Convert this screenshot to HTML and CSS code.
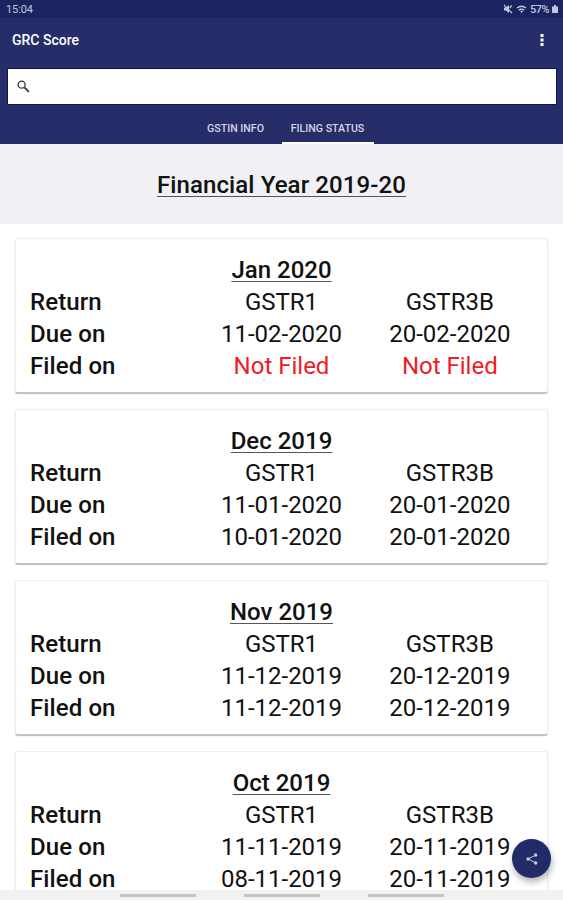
FILE: index.html
```html
<!DOCTYPE html>
<html lang="en">
  <head>
    <meta charset="UTF-8" />
    <meta name="viewport" content="width=device-width, initial-scale=1.0" />
    <title>GRC Score</title>
    <link rel="stylesheet" href="styles.css">
  </head>
  <body>
    <div class="screen">
      <div class="status-bar">
        <span class="clock">15:04</span>
        <div class="status-icons">
          <svg class="mute-icon" viewBox="0 0 10 10">
            <path d="M1 3.5h2L6 1v8L3 6.5H1z" fill="currentColor" />
            <path d="M1 1l8 8M6.5 4L9 1.5" stroke="currentColor" stroke-width="1.2" />
          </svg>
          <svg class="wifi-icon" viewBox="0 0 12 10">
            <path d="M1 3.4Q6-.6 11 3.4M3 5.8q3-2.2 6 0" fill="none" stroke="currentColor" stroke-width="1.5" />
            <path d="M4.5 7Q6 6 7.5 7L6 9z" fill="currentColor" />
          </svg>
          <span class="battery">57%</span>
          <svg class="battery-icon" viewBox="0 0 6 8">
            <path d="M2 0h2v1.5h2V8H0V1.5h2z" fill="currentColor" />
          </svg>
        </div>
      </div>

      <header class="header">
        <div class="toolbar">
          <h1 class="title">GRC Score</h1>
          <svg class="menu-icon" viewBox="0 0 4 14">
            <path d="M.5 1h3v3h-3zM.5 5.5h3v3h-3zM.5 10h3v3h-3z" fill="currentColor" />
          </svg>
        </div>
        <div class="search-box">
          <svg class="search-icon" viewBox="0 0 14 14">
            <circle cx="5" cy="5" r="3.8" fill="none" stroke="currentColor" stroke-width="1.4" />
            <path d="M8 8l4.7 4.7" stroke="currentColor" stroke-width="1.9" />
          </svg>
        </div>
        <nav class="tabs">
          <a class="tab">GSTIN INFO</a>
          <a class="tab active">FILING STATUS</a>
        </nav>
      </header>

      <div class="year-banner">
        <h2 class="year">Financial Year 2019-20</h2>
      </div>

      <main class="card-list">
        <section class="card">
          <h3 class="month">Jan 2020</h3>
          <div class="row"><b>Return</b><span>GSTR1</span><span>GSTR3B</span></div>
          <div class="row"><b>Due on</b><span>11-02-2020</span><span>20-02-2020</span></div>
          <div class="row not-filed"><b>Filed on</b><span>Not Filed</span><span>Not Filed</span></div>
        </section>

        <section class="card">
          <h3 class="month">Dec 2019</h3>
          <div class="row"><b>Return</b><span>GSTR1</span><span>GSTR3B</span></div>
          <div class="row"><b>Due on</b><span>11-01-2020</span><span>20-01-2020</span></div>
          <div class="row"><b>Filed on</b><span>10-01-2020</span><span>20-01-2020</span></div>
        </section>

        <section class="card">
          <h3 class="month">Nov 2019</h3>
          <div class="row"><b>Return</b><span>GSTR1</span><span>GSTR3B</span></div>
          <div class="row"><b>Due on</b><span>11-12-2019</span><span>20-12-2019</span></div>
          <div class="row"><b>Filed on</b><span>11-12-2019</span><span>20-12-2019</span></div>
        </section>

        <section class="card">
          <h3 class="month">Oct 2019</h3>
          <div class="row"><b>Return</b><span>GSTR1</span><span>GSTR3B</span></div>
          <div class="row"><b>Due on</b><span>11-11-2019</span><span>20-11-2019</span></div>
          <div class="row"><b>Filed on</b><span>08-11-2019</span><span>20-11-2019</span></div>
        </section>
      </main>

      <div class="nav-bar">
        <span class="nav-handle"></span>
        <span class="nav-handle"></span>
        <span class="nav-handle"></span>
      </div>

      <button class="share-btn" aria-label="Share">
        <svg class="share-icon" viewBox="0 0 12 12">
          <path d="M10 2L2 6l8 4" fill="none" stroke="currentColor" stroke-width="1" />
          <circle cx="9.7" cy="2" r="1.7" fill="currentColor" />
          <circle cx="2" cy="6" r="1.7" fill="currentColor" />
          <circle cx="9.7" cy="10" r="1.7" fill="currentColor" />
        </svg>
      </button>
    </div>
  </body>
</html>
```
FILE: styles.css
```css
* {
  margin: 0;
  padding: 0;
  box-sizing: border-box;
}

body {
  font-family: Roboto, sans-serif;
  background: #ffffff;
  color: #111111;
}

.screen {
  position: relative;
  display: flex;
  flex-direction: column;
  height: 900px;
  overflow: hidden;
}

.status-bar {
  display: flex;
  flex-shrink: 0;
  align-items: center;
  justify-content: space-between;
  height: 18px;
  padding: 0 5px 0 6px;
  background: #1c245f;
  color: #c3c6dc;
  font-size: 11px;
}

.clock {
  letter-spacing: -0.1px;
}

.status-icons {
  display: flex;
  align-items: center;
  gap: 3px;
}

.mute-icon {
  width: 10px;
  height: 10px;
}

.wifi-icon {
  width: 11px;
  height: 9px;
}

.battery {
  font-weight: 500;
  letter-spacing: -0.5px;
}

.battery-icon {
  width: 6px;
  height: 8px;
}

.header {
  flex-shrink: 0;
  height: 126px;
  background: #262d69;
  color: #ffffff;
}

.toolbar {
  display: flex;
  align-items: center;
  justify-content: space-between;
  height: 45px;
  padding: 0 19px 1px 12px;
}

.title {
  font-size: 14px;
  font-weight: 500;
}

.menu-icon {
  width: 4px;
  height: 14px;
}

.search-box {
  display: flex;
  align-items: center;
  height: 35px;
  margin: 6px 7px 0 8px;
  padding-left: 9px;
  background: #ffffff;
  box-shadow: 0 0 0 1px #10145a;
}

.search-icon {
  width: 13px;
  height: 13px;
  margin-bottom: 1px;
  color: #333333;
}

.tabs {
  display: flex;
  justify-content: center;
  height: 40px;
}

.tab {
  display: flex;
  align-items: center;
  justify-content: center;
  width: 92px;
  padding-top: 10px;
  border-bottom: 2px solid transparent;
  color: #d4d6e6;
  font-size: 10.6px;
  font-weight: 500;
  white-space: nowrap;
}

.active {
  border-bottom-color: #ffffff;
}

.year-banner {
  display: flex;
  flex-shrink: 0;
  align-items: center;
  justify-content: center;
  height: 80px;
  padding-top: 2px;
  background: #f0f0f5;
}

.year,
.month {
  font-size: 24px;
  font-weight: 500;
  letter-spacing: 0.1px;
  text-decoration: underline;
  text-decoration-color: #555555;
  text-decoration-thickness: 1px;
  text-underline-offset: 3px;
  text-decoration-skip-ink: none;
}

.month {
  letter-spacing: 0;
  line-height: 31px;
  height: 32px;
  text-align: center;
}

.card-list {
  display: flex;
  flex: 1;
  flex-direction: column;
  gap: 16px;
  min-height: 0;
  padding: 14px 15px 0;
  overflow: hidden;
}

.card {
  flex-shrink: 0;
  height: 155px;
  padding: 16px 13px 0;
  background: #ffffff;
  border: 1px solid #eeeeee;
  border-bottom-color: #c4c4c4;
  border-radius: 3px;
  box-shadow: 0 1px 1px #bbbbbb;
}

.row {
  display: grid;
  grid-template-columns: 1fr 1fr 1fr;
  height: 32px;
  font-size: 24px;
  line-height: 30px;
  text-align: center;
}

.row b {
  padding-left: 1px;
  font-weight: 500;
  letter-spacing: 0.1px;
  text-align: left;
}

.not-filed span {
  color: #ee1c24;
}

.nav-bar {
  display: flex;
  flex-shrink: 0;
  justify-content: center;
  gap: 48px;
  height: 10px;
  padding-top: 4px;
  background: #f2f2f2;
}

.nav-handle {
  width: 76px;
  height: 3px;
  background: #c4c4c4;
}

.share-btn {
  position: absolute;
  right: 12px;
  bottom: 22px;
  display: flex;
  align-items: center;
  justify-content: center;
  width: 39px;
  height: 39px;
  background: #222a68;
  border: none;
  border-radius: 50%;
  box-shadow: 1px 4px 6px rgba(0, 0, 0, 0.3);
  color: #c8cadf;
}

.share-icon {
  width: 12px;
  height: 12px;
}
```
